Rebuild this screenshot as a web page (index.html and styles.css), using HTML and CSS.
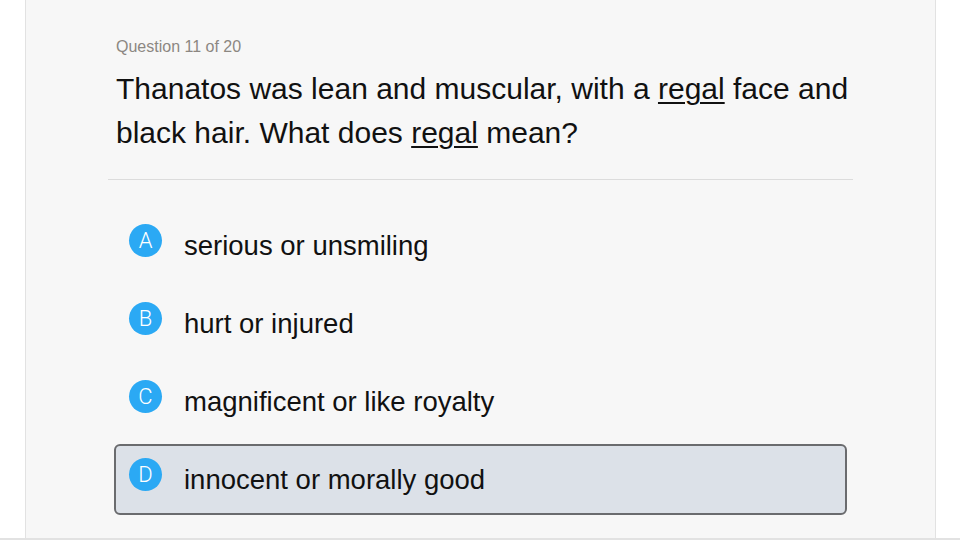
FILE: index.html
```html
<!DOCTYPE html>
<html>
<head>
<meta charset="utf-8">
<link rel="stylesheet" href="styles.css">
</head>
<body>
<div class="page">
  <main class="card">
    <header class="question">
      <div class="counter">Question 11 of 20</div>
      <p class="prompt">Thanatos was lean and muscular, with a <u>regal</u> face and black hair. What does <u>regal</u> mean?</p>
    </header>
    <ul class="options">
      <li class="option"><span class="badge">A</span><span class="label">serious or unsmiling</span></li>
      <li class="option"><span class="badge">B</span><span class="label">hurt or injured</span></li>
      <li class="option"><span class="badge">C</span><span class="label">magnificent or like royalty</span></li>
      <li class="option selected"><span class="badge">D</span><span class="label">innocent or morally good</span></li>
    </ul>
  </main>
</div>
</body>
</html>
```
FILE: styles.css
```css
html, body {
  margin: 0;
  padding: 0;
  background: #ffffff;
}
body {
  font-family: "Liberation Sans", Arial, Helvetica, sans-serif;
  color: #111;
}
.page {
  height: 538px;
  border-bottom: 2px solid #e2e2e2;
  overflow: hidden;
}
.card {
  margin: 0 24px 0 25px;
  height: 100%;
  background: #f7f7f7;
  border-left: 1px solid #e2e2e2;
  border-right: 1px solid #e2e2e2;
  padding: 0 82px 0 82px;
  box-sizing: border-box;
}
.question {
  padding: 37px 0 24px 8px;
  border-bottom: 1px solid #dcdcdc;
}
.counter {
  font-size: 16px;
  line-height: 20px;
  color: #8c8782;
}
.prompt {
  margin: 10px 0 0 0;
  font-size: 30px;
  line-height: 44px;
  color: #111;
}
.prompt u {
  text-decoration-thickness: 2px;
  text-underline-offset: 3px;
}
.options {
  list-style: none;
  margin: 30px 0 0 0;
  padding: 0 6px;
  display: flex;
  flex-direction: column;
  gap: 7px;
}
.option {
  height: 71px;
  box-sizing: border-box;
  display: flex;
  align-items: center;
  padding-left: 13px;
  border: 2px solid transparent;
  border-radius: 6px;
}
.option.selected {
  background: #dce1e8;
  border-color: #6a6b6e;
}
.badge {
  width: 33px;
  height: 33px;
  border-radius: 50%;
  background: #2ba9f4;
  color: #fff;
  font-family: Roboto, "Liberation Sans", sans-serif;
  font-size: 22px;
  font-weight: 300;
  display: flex;
  align-items: center;
  justify-content: center;
  margin-top: -10px;
  flex: none;
}
.label {
  margin-left: 22px;
  font-size: 27.5px;
  color: #111;
}
```
